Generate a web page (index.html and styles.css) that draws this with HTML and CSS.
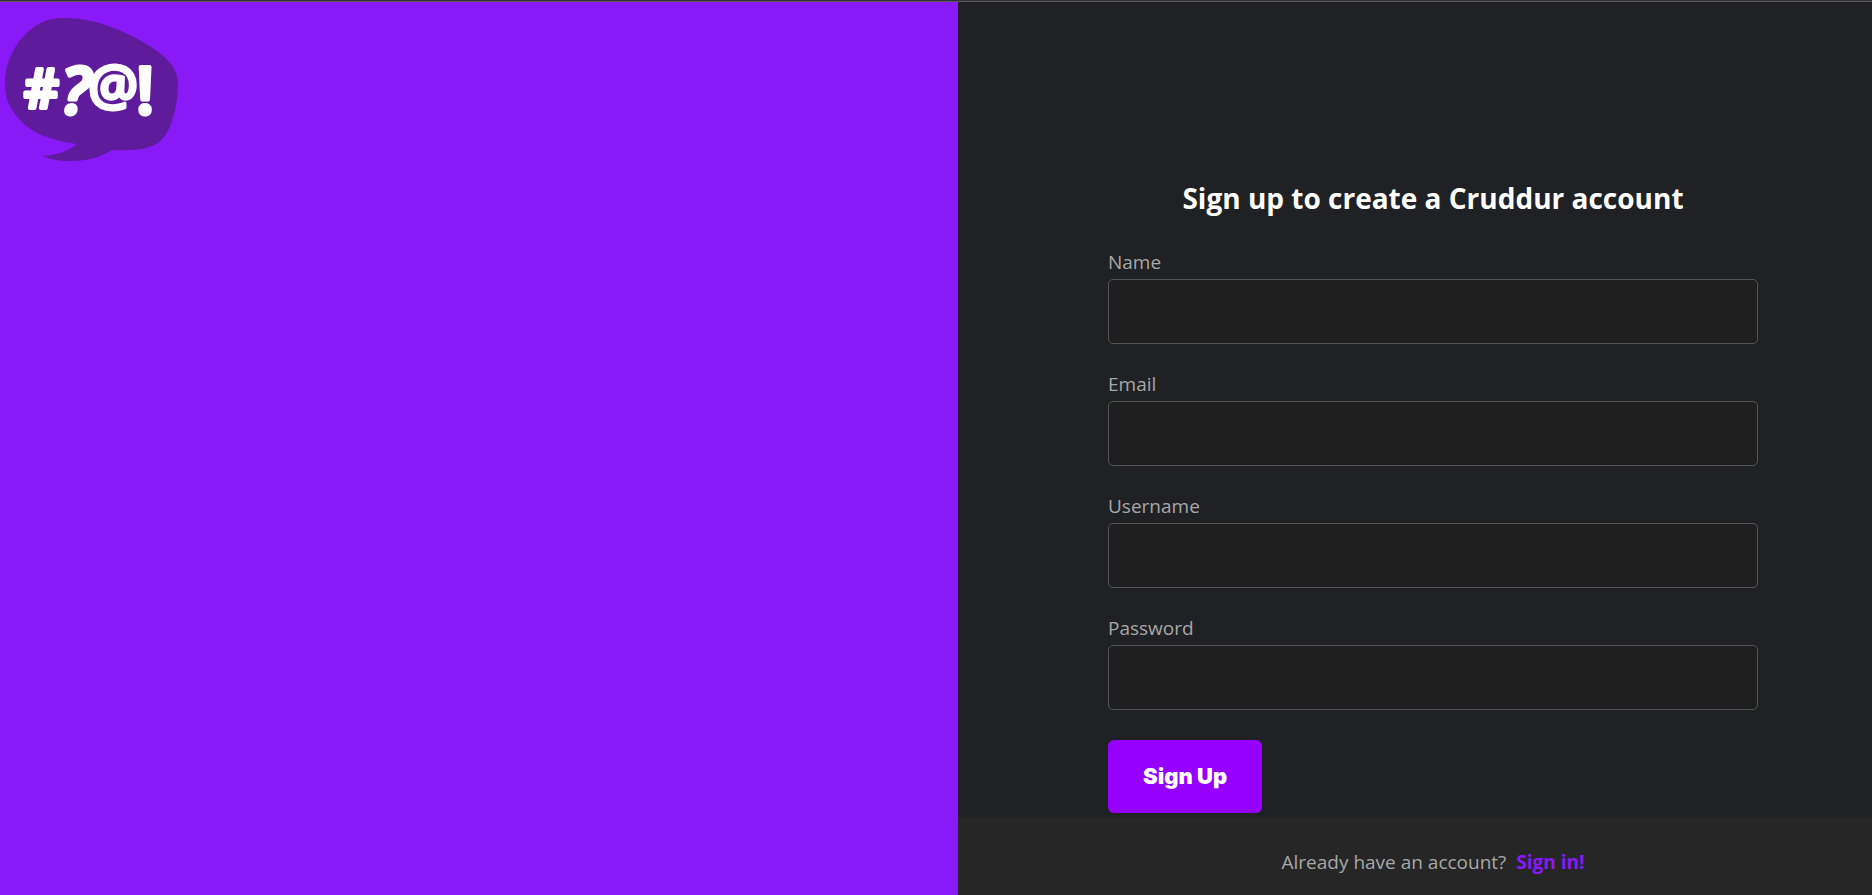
FILE: index.html
```html
<!DOCTYPE html>
<html lang="en">
<head>
<meta charset="utf-8">
<title>Cruddur</title>
<link rel="stylesheet" href="styles.css">
</head>
<body>
<main class="signup">
  <section class="brand">
    <svg class="logo" viewBox="0 2 180 160" role="img" aria-label="Cruddur">
      <path class="bubble" d="M65 18C95 18 125 31 148 45C166 56 178 68 178 83C178 105 172 127 164 137C155 149 138 151 112 150C100 158 85 161 70 161C58 161 50 159 43 156C58 155 68 151 77 144C50 140 33 134 20 120C9 108 5 98 5 83C5 60 18 38 33 28C43 20 53 18 65 18Z"/>
      <text class="mark hash" x="24" y="108">#</text>
      <text class="mark query" x="61" y="114">?</text>
      <text class="mark at" x="88" y="105">@</text>
      <text class="mark bang" x="136" y="114">!</text>
    </svg>
  </section>
  <section class="panel">
    <form class="form">
      <h1 class="title">Sign up to create a Cruddur account</h1>
      <div class="field"><label for="name">Name</label><input id="name" type="text"></div>
      <div class="field"><label for="email">Email</label><input id="email" type="email"></div>
      <div class="field"><label for="username">Username</label><input id="username" type="text"></div>
      <div class="field"><label for="password">Password</label><input id="password" type="password"></div>
      <button class="submit" type="submit">Sign Up</button>
    </form>
    <footer class="foot"><span>Already have an account?</span><a href="#signin">Sign in!</a></footer>
  </section>
</main>
</body>
</html>
```
FILE: styles.css
```css
* { box-sizing: border-box; }

body {
  margin: 0;
  border-top: 1px solid #343436;
  background: #202124;
  color: #a8a8a8;
  font: 19px/24px "Open Sans", sans-serif;
}

.signup {
  display: grid;
  grid-template-columns: 958fr 914fr;
  min-height: calc(100vh - 1px);
  border-top: 1px solid #5a5a5c;
}

.brand { background: #8919f6; }

.logo {
  display: block;
  width: 180px;
  height: 160px;
}

.bubble { fill: #5e1c9c; }

.mark {
  fill: #fff;
  stroke: #fff;
  stroke-width: 3px;
  stroke-linejoin: round;
  font-family: "Open Sans", sans-serif;
  font-weight: 600;
}

.hash { font-size: 54px; stroke-width: 4px; }
.query { font-size: 66px; font-style: italic; stroke-width: 4px; }
.at { font-size: 56px; }
.bang { font-size: 66px; stroke-width: 4px; }

.panel {
  display: flex;
  flex-direction: column;
  justify-content: flex-end;
}

.form {
  display: flex;
  flex-direction: column;
  gap: 30px;
  padding: 0 114px 4px 150px;
}

.title {
  margin: 0 0 4px;
  color: #fff;
  font-size: 28px;
  line-height: 40px;
  font-weight: 700;
  text-align: center;
}

.field {
  display: flex;
  flex-direction: column;
  gap: 7px;
}

.field label { line-height: 20px; }

.field input {
  width: 100%;
  height: 65px;
  padding: 0 16px;
  border: 1px solid #555;
  border-radius: 5px;
  background: #1f1f1f;
  color: #fff;
  font: inherit;
}

.submit {
  align-self: flex-start;
  padding: 24px 35px;
  border: 0;
  border-radius: 6px;
  background: #9500ff;
  color: #fff;
  font: 900 22px/25px Inter, sans-serif;
}

.foot {
  display: flex;
  justify-content: center;
  gap: 10px;
  padding: 33px 114px 21px 150px;
  background: #262626;
}

.foot a {
  color: #8919f6;
  font-weight: 700;
  text-decoration: none;
}
```
